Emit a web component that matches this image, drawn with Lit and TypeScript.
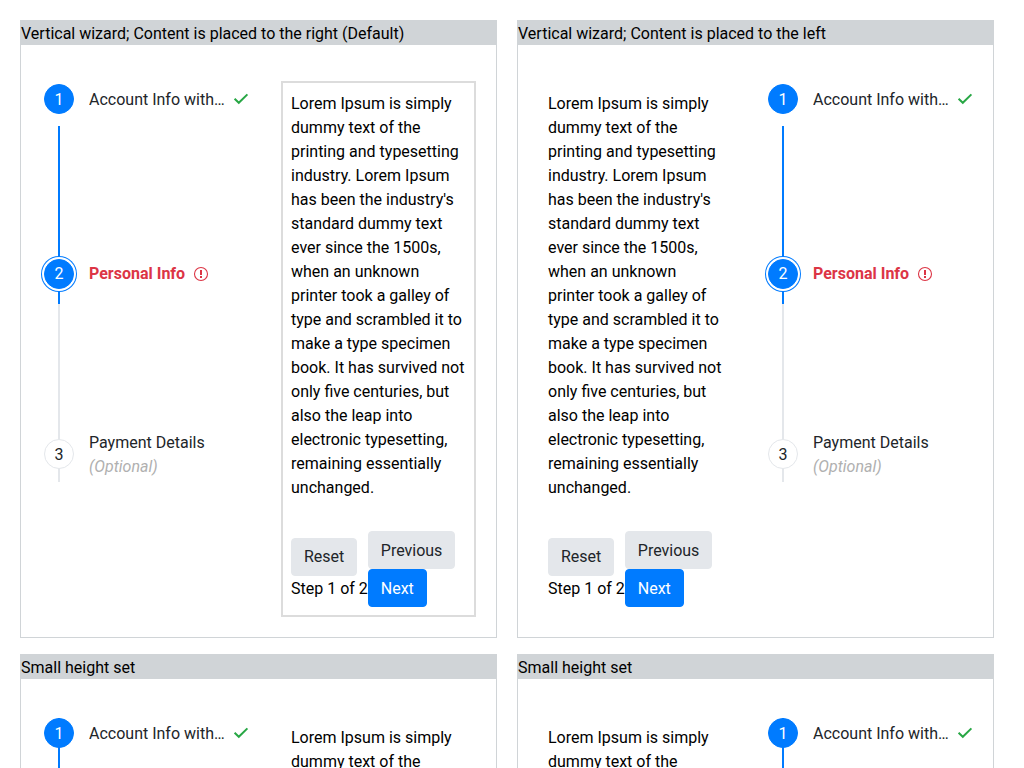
import { LitElement, html, css, svg } from "lit";
import { customElement, property } from "lit/decorators.js";
import { classMap } from "lit/directives/class-map.js";

type StepState = "complete" | "current" | "pending";

interface WizardStep {
  title: string;
  state: StepState;
  note?: string;
  icon?: "check" | "alert";
}

const STEPS: WizardStep[] = [
  { title: "Account Info without navigation", state: "complete", icon: "check" },
  { title: "Personal Info", state: "current", icon: "alert" },
  { title: "Payment Details", state: "pending", note: "(Optional)" },
];

const ICONS = {
  check: svg`<path d="M1.6 7.8 L5.8 11.8 L14.4 3.4" fill="none" stroke="currentColor" stroke-width="2"/>`,
  alert: svg`<circle cx="8" cy="8" r="6.5" fill="none" stroke="currentColor" stroke-width="1.1"/>
    <path d="M7 4h2v5H7z M7 10h2v2H7z" fill="currentColor"/>`,
};

@customElement("step-wizard")
export class StepWizard extends LitElement {
  @property() side: "right" | "left" = "right";
  @property({ type: Boolean }) outlined = false;
  @property({ type: Boolean }) compact = false;

  static styles = css`
    :host {
      display: block;
    }
    .wizard {
      display: grid;
      grid-template-columns: 240px minmax(0, 1fr);
      padding: 36px 20px 20px;
    }
    .content-left {
      grid-template-columns: minmax(0, 1fr) 240px;
    }
    .steps {
      list-style: none;
      margin: 0;
      padding: 3px 32px 0 3px;
    }
    .content-left .steps {
      order: 1;
      padding: 3px 0 0 35px;
    }
    .step {
      box-sizing: border-box;
      display: flex;
      flex-direction: column;
      justify-content: flex-end;
      background: linear-gradient(#e4e7eb, #e4e7eb) 14px 0 / 2px 100% no-repeat;
      min-height: 178px;
      padding-bottom: 3px;
    }
    .step.current {
      background-image: linear-gradient(#007bff, #007bff);
      padding-bottom: 15px;
    }
    .step.complete {
      background-image: none;
      min-height: 0;
      padding-bottom: 12px;
    }
    .compact .step.complete {
      background-image: linear-gradient(#007bff, #007bff);
    }
    .head {
      display: flex;
      align-items: center;
      gap: 15px;
      color: #212529;
    }
    .marker {
      box-sizing: border-box;
      flex: none;
      width: 30px;
      height: 30px;
      border: 1px solid #e4e7eb;
      border-radius: 50%;
      background: #fff;
      line-height: 29px;
      text-align: center;
    }
    .complete .marker,
    .current .marker {
      border-color: #007bff;
      background: #007bff;
      color: #fff;
    }
    .current .marker {
      box-shadow: 0 0 0 2px #fff, 0 0 0 3px #007bff;
      line-height: 28px;
    }
    .label {
      display: flex;
      align-items: center;
      gap: 8px;
      min-width: 0;
    }
    .title {
      overflow: hidden;
      padding-top: 2px;
      text-overflow: ellipsis;
      white-space: nowrap;
    }
    .current .title {
      padding-top: 0;
    }
    .current .label {
      color: #dc3545;
      font-weight: 700;
    }
    .note {
      display: block;
      color: #b0b0b0;
      font-style: italic;
    }
    .icon {
      flex: none;
      width: 16px;
      height: 16px;
    }
    .icon.check {
      color: #28a745;
    }
    .body {
      border: 2px solid transparent;
      padding: 9px 8px 8px;
    }
    .outlined .body {
      border-color: #dcdcdc;
    }
    .text {
      margin: 0 0 31px;
    }
    .nav {
      display: flex;
      align-items: center;
    }
    .status {
      display: flex;
      flex-direction: column;
      align-items: flex-start;
      white-space: nowrap;
    }
    .count {
      padding-top: 1px;
      line-height: 23px;
    }
    .moves {
      display: flex;
      flex-direction: column;
      align-items: flex-start;
    }
    .btn {
      border: 1px solid #e4e7eb;
      border-radius: 4px;
      background: #e4e7eb;
      color: #212529;
      padding: 6px 12px;
      font: inherit;
    }
    .moves .btn {
      padding: 7px 12px 5px;
    }
    .primary {
      border-color: #007bff;
      background: #007bff;
      color: #fff;
    }
  `;

  private renderStep(step: WizardStep, index: number) {
    return html`<li class="step ${step.state}">
      <div class="head">
        <span class="marker">${index + 1}</span>
        <span class="label">
          <span class="title">${step.title}${step.note ? html`<span class="note">${step.note}</span>` : ""}</span>
          ${step.icon
            ? html`<svg class="icon ${step.icon}" viewBox="0 0 16 16" aria-hidden="true">${ICONS[step.icon]}</svg>`
            : ""}
        </span>
      </div>
    </li>`;
  }

  render() {
    const classes = {
      wizard: true,
      "content-left": this.side === "left",
      outlined: this.outlined,
      compact: this.compact,
    };
    return html`<div class=${classMap(classes)}>
      <ol class="steps">${STEPS.map((s, i) => this.renderStep(s, i))}</ol>
      <div class="body">
        <p class="text">
          Lorem Ipsum is simply dummy text of the printing and typesetting industry. Lorem Ipsum has been the
          industry's standard dummy text ever since the 1500s, when an unknown printer took a galley of type and
          scrambled it to make a type specimen book. It has survived not only five centuries, but also the leap
          into electronic typesetting, remaining essentially unchanged.
        </p>
        <div class="nav">
          <div class="status">
            <button class="btn" type="button">Reset</button>
            <span class="count">Step 1 of 2</span>
          </div>
          <div class="moves">
            <button class="btn" type="button">Previous</button>
            <button class="btn primary" type="button">Next</button>
          </div>
        </div>
      </div>
    </div>`;
  }
}

@customElement("app-root")
export class AppRoot extends LitElement {
  static styles = css`
    :host {
      display: block;
      box-sizing: border-box;
      height: 100vh;
      overflow: hidden;
      background: #fff;
      color: #000;
      font: 16px/24px Roboto, sans-serif;
    }
    .page {
      display: grid;
      grid-template-columns: repeat(2, minmax(0, 1fr));
      gap: 16px 20px;
      padding: 20px 30px 20px 20px;
    }
    .card {
      border: 1px solid #d0d4d7;
    }
    .heading {
      margin: 0;
      padding-top: 1px;
      background: #d0d4d7;
      font: inherit;
      line-height: 23px;
    }
  `;

  render() {
    return html`<main class="page">
      <section class="card">
        <h2 class="heading">Vertical wizard; Content is placed to the right (Default)</h2>
        <step-wizard outlined></step-wizard>
      </section>
      <section class="card">
        <h2 class="heading">Vertical wizard; Content is placed to the left</h2>
        <step-wizard side="left"></step-wizard>
      </section>
      <section class="card">
        <h2 class="heading">Small height set</h2>
        <step-wizard compact></step-wizard>
      </section>
      <section class="card">
        <h2 class="heading">Small height set</h2>
        <step-wizard side="left" compact></step-wizard>
      </section>
    </main>`;
  }
}
